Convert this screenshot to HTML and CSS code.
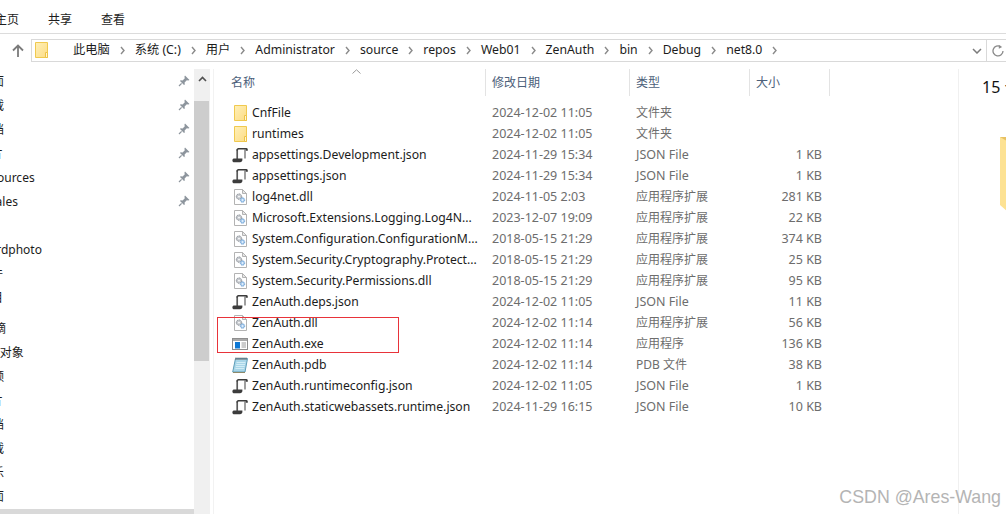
FILE: index.html
```html
<!DOCTYPE html>
<html lang="zh">
<head>
<meta charset="utf-8">
<title>net8.0</title>
<link rel="stylesheet" href="styles.css">
</head>
<body>
<svg class="defs" width="0" height="0" aria-hidden="true">
  <defs>
    <linearGradient id="fy" x1="0" y1="0" x2="1" y2="1">
      <stop offset="0" stop-color="#fff0b8"/><stop offset="1" stop-color="#fcdc85"/>
    </linearGradient>
    <symbol id="folder" viewBox="0 0 16 16">
      <path d="M2.5 .5H14.5V15.5H2.5Z" fill="url(#fy)" stroke="#f0c94f"/>
      <path d="M12.5 15.5V10.5H14.5V15.5Z" fill="#fff6d0" stroke="#eec346"/>
    </symbol>
    <symbol id="script" viewBox="0 0 16 16">
      <path d="M5.2 2.5V12.5" stroke="#5a5a5a" stroke-width="1.7" fill="none"/>
      <path d="M13 2.5V11.5" stroke="#777" stroke-width="1.4" fill="none"/>
      <path d="M4.4 3C4.6 1.6 5.6 1 7 1H14.4C15.6 1 16 2.2 15.8 3.8H13.8V2.6H7C6.2 2.6 6 3 6 3.6H4.4Z" fill="#3c3c3c"/>
      <path d="M.4 13.4C.4 12.2 1.2 11.6 2.4 11.6H10.4V12.8C10.4 14.4 9.4 15.2 8 15.2H2.2C1 15.2 .4 14.6 .4 13.4Z" fill="#3c3c3c"/>
    </symbol>
    <symbol id="dll" viewBox="0 0 16 16">
      <path d="M2.5 .5H10.5L14.5 4.5V15.5H2.5Z" fill="#fff" stroke="#b3b3b3"/>
      <path d="M10.5 .5V4.5H14.5Z" fill="#e6e6e6" stroke="#b3b3b3"/>
      <circle cx="7" cy="7.6" r="2.7" fill="#c4c8cd" stroke="#8a8f96" stroke-dasharray="1.4 .6"/>
      <circle cx="7" cy="7.6" r=".9" fill="#fff"/>
      <circle cx="10.5" cy="11" r="2.2" fill="#a9cdf0" stroke="#6d9fd0" stroke-dasharray="1.2 .5"/>
      <circle cx="10.5" cy="11" r=".7" fill="#fff"/>
    </symbol>
    <symbol id="exe" viewBox="0 0 16 16">
      <rect x=".5" y="2.5" width="15" height="11" fill="#fff" stroke="#8e8e8e"/>
      <rect x="1" y="3" width="14" height="2" fill="#a9a9a9"/>
      <rect x="3" y="6" width="5" height="6.5" fill="#0f78d4"/>
      <path d="M9.5 7H14M9.5 9H14M9.5 11H14" stroke="#9a9a9a"/>
    </symbol>
    <symbol id="pdb" viewBox="0 0 16 16">
      <path d="M3.5 1.5H15.5L13 15H.7Z" fill="#a9d6e8" stroke="#5f9db8"/>
      <path d="M1 15.5H13" stroke="#8f8a6a"/>
      <path d="M4 .5V3M6 .5V3M8 .5V3M10 .5V3M12 .5V3M14 .5V3" stroke="#666"/>
      <path d="M4.6 5.5H13.4M4.2 7.5H13M3.8 9.5H12.6M3.4 11.5H12.2" stroke="#d3edf6"/>
    </symbol>
    <symbol id="pin" viewBox="0 0 12 12">
      <path d="M7 .5L11.5 5L10.3 5.6L8.8 5.2L6.6 7.4L6.8 9.4L6 10L2 6L2.6 5.2L4.6 5.4L6.8 3.2L6.4 1.7Z" fill="#8d959d"/>
      <path d="M3.6 8.4L1 11" stroke="#8d959d" stroke-width="1.2"/>
    </symbol>
    <symbol id="chev" viewBox="0 0 5 9">
      <path d="M1 1L4 4.5L1 8" fill="none" stroke="#8a8a8a" stroke-width="1.4"/>
    </symbol>
  </defs>
</svg>

<header class="ribbon">
  <span class="tab tab-home">主页</span>
  <span class="tab">共享</span>
  <span class="tab">查看</span>
</header>

<nav class="addressbar">
  <svg class="up" width="12" height="13" viewBox="0 0 12 13"><path d="M6 13V2M1 6.5L6 1.5L11 6.5" fill="none" stroke="#7b7b7b" stroke-width="1.8"/></svg>
  <div class="address">
    <svg class="ico crumb-folder"><use href="#folder"/></svg>
    <span>此电脑</span><svg class="chev"><use href="#chev"/></svg>
    <span>系统 (C:)</span><svg class="chev"><use href="#chev"/></svg>
    <span>用户</span><svg class="chev"><use href="#chev"/></svg>
    <span>Administrator</span><svg class="chev"><use href="#chev"/></svg>
    <span>source</span><svg class="chev"><use href="#chev"/></svg>
    <span>repos</span><svg class="chev"><use href="#chev"/></svg>
    <span>Web01</span><svg class="chev"><use href="#chev"/></svg>
    <span>ZenAuth</span><svg class="chev"><use href="#chev"/></svg>
    <span>bin</span><svg class="chev"><use href="#chev"/></svg>
    <span>Debug</span><svg class="chev"><use href="#chev"/></svg>
    <span>net8.0</span><svg class="chev"><use href="#chev"/></svg>
    <svg class="dropdown" width="10" height="6" viewBox="0 0 10 6"><path d="M1 1L5 5L9 1" fill="none" stroke="#7b7b7b" stroke-width="1.5"/></svg>
    <svg class="refresh" width="12" height="12" viewBox="0 0 12 12"><path d="M8.5 1.6A5 5 0 1 0 11 6" fill="none" stroke="#8a8a8a" stroke-width="1.3"/><path d="M6.8 0V3.8L10.2 2Z" fill="#8a8a8a"/></svg>
  </div>
</nav>

<main class="body">
  <aside class="sidebar">
    <div class="tree">
      <div class="tree-row"><span class="lbl c1">桌面</span><svg class="pin"><use href="#pin"/></svg></div>
      <div class="tree-row"><span class="lbl c1">下载</span><svg class="pin"><use href="#pin"/></svg></div>
      <div class="tree-row"><span class="lbl c1">文档</span><svg class="pin"><use href="#pin"/></svg></div>
      <div class="tree-row"><span class="lbl c2">图片</span><svg class="pin"><use href="#pin"/></svg></div>
      <div class="tree-row"><span class="lbl c6">Resources</span><svg class="pin"><use href="#pin"/></svg></div>
      <div class="tree-row"><span class="lbl c5">Sales</span><svg class="pin"><use href="#pin"/></svg></div>
      <div class="tree-row"></div>
      <div class="tree-row"><span class="lbl c7">Wordphoto</span></div>
      <div class="tree-row"><span class="lbl c2">文件</span></div>
      <div class="tree-row group-end"><span class="lbl c2">项目</span></div>
      <div class="tree-row"><span class="lbl c4">网摘</span></div>
      <div class="tree-row"><span class="lbl c3d">3D 对象</span></div>
      <div class="tree-row"><span class="lbl c1">视频</span></div>
      <div class="tree-row"><span class="lbl c2">图片</span></div>
      <div class="tree-row"><span class="lbl c1">文档</span></div>
      <div class="tree-row"><span class="lbl c1">下载</span></div>
      <div class="tree-row"><span class="lbl c1">音乐</span></div>
      <div class="tree-row"><span class="lbl c1">桌面</span></div>
    </div>
    <div class="h-scroll"></div>
  </aside>
  <div class="v-scroll">
    <div class="v-up"><svg width="9" height="6" viewBox="0 0 9 6"><path d="M1 5L4.5 1.5L8 5" fill="none" stroke="#505050" stroke-width="1.6"/></svg></div>
    <div class="v-thumb"></div>
  </div>

  <section class="files">
    <div class="head">
      <div class="hcell hname">名称<svg class="sort" width="9" height="5" viewBox="0 0 9 5"><path d="M.5 4.5L4.5 .8L8.5 4.5" fill="none" stroke="#9a9a9a"/></svg></div>
      <div class="hcell">修改日期</div>
      <div class="hcell">类型</div>
      <div class="hcell">大小</div>
    </div>
    <div class="rows">
      <div class="row"><div class="name"><svg class="ico"><use href="#folder"/></svg>CnfFile</div><div class="meta">2024-12-02 11:05</div><div class="meta cjk">文件夹</div><div class="meta size"></div></div>
      <div class="row"><div class="name"><svg class="ico"><use href="#folder"/></svg>runtimes</div><div class="meta">2024-12-02 11:05</div><div class="meta cjk">文件夹</div><div class="meta size"></div></div>
      <div class="row"><div class="name"><svg class="ico"><use href="#script"/></svg>appsettings.Development.json</div><div class="meta">2024-11-29 15:34</div><div class="meta">JSON File</div><div class="meta size">1 KB</div></div>
      <div class="row"><div class="name"><svg class="ico"><use href="#script"/></svg>appsettings.json</div><div class="meta">2024-11-29 15:34</div><div class="meta">JSON File</div><div class="meta size">1 KB</div></div>
      <div class="row"><div class="name"><svg class="ico"><use href="#dll"/></svg>log4net.dll</div><div class="meta">2024-11-05 2:03</div><div class="meta cjk">应用程序扩展</div><div class="meta size">281 KB</div></div>
      <div class="row"><div class="name"><svg class="ico"><use href="#dll"/></svg>Microsoft.Extensions.Logging.Log4N...</div><div class="meta">2023-12-07 19:09</div><div class="meta cjk">应用程序扩展</div><div class="meta size">22 KB</div></div>
      <div class="row"><div class="name"><svg class="ico"><use href="#dll"/></svg>System.Configuration.ConfigurationM...</div><div class="meta">2018-05-15 21:29</div><div class="meta cjk">应用程序扩展</div><div class="meta size">374 KB</div></div>
      <div class="row"><div class="name"><svg class="ico"><use href="#dll"/></svg>System.Security.Cryptography.Protect...</div><div class="meta">2018-05-15 21:29</div><div class="meta cjk">应用程序扩展</div><div class="meta size">25 KB</div></div>
      <div class="row"><div class="name"><svg class="ico"><use href="#dll"/></svg>System.Security.Permissions.dll</div><div class="meta">2018-05-15 21:29</div><div class="meta cjk">应用程序扩展</div><div class="meta size">95 KB</div></div>
      <div class="row"><div class="name"><svg class="ico"><use href="#script"/></svg>ZenAuth.deps.json</div><div class="meta">2024-12-02 11:05</div><div class="meta">JSON File</div><div class="meta size">11 KB</div></div>
      <div class="row"><div class="name"><svg class="ico"><use href="#dll"/></svg>ZenAuth.dll</div><div class="meta">2024-12-02 11:14</div><div class="meta cjk">应用程序扩展</div><div class="meta size">56 KB</div></div>
      <div class="row"><div class="name"><svg class="ico"><use href="#exe"/></svg>ZenAuth.exe</div><div class="meta">2024-12-02 11:14</div><div class="meta cjk">应用程序</div><div class="meta size">136 KB</div></div>
      <div class="row"><div class="name"><svg class="ico"><use href="#pdb"/></svg>ZenAuth.pdb</div><div class="meta">2024-12-02 11:14</div><div class="meta cjk">PDB 文件</div><div class="meta size">38 KB</div></div>
      <div class="row"><div class="name"><svg class="ico"><use href="#script"/></svg>ZenAuth.runtimeconfig.json</div><div class="meta">2024-12-02 11:05</div><div class="meta">JSON File</div><div class="meta size">1 KB</div></div>
      <div class="row"><div class="name"><svg class="ico"><use href="#script"/></svg>ZenAuth.staticwebassets.runtime.json</div><div class="meta">2024-11-29 16:15</div><div class="meta">JSON File</div><div class="meta size">10 KB</div></div>
    </div>
    <div class="redbox"></div>
  </section>

  <aside class="details">
    <div class="count">15 个项目</div>
    <svg class="bigfolder" width="40" height="74" viewBox="0 0 40 74"><path d="M0 0H40V74H7L0 68Z" fill="#fde293"/><path d="M0 0H7L7 4Z" fill="#e7c163"/></svg>
  </aside>
</main>

<div class="watermark">CSDN @Ares-Wang</div>
</body>
</html>
```

FILE: styles.css
```css
* { box-sizing: border-box; }
html, body { margin: 0; height: 100%; }
body {
  width: 1006px;
  height: 514px;
  overflow: hidden;
  position: relative;
  background: #fff;
  color: #1c1c1c;
  font: 12.2px/17px "Noto Sans", "Noto Sans CJK SC", sans-serif;
  display: flex;
  flex-direction: column;
}
.defs { position: absolute; }

.ribbon {
  height: 34px;
  flex: none;
  border-bottom: 1px solid #dcdcdc;
  display: flex;
  align-items: center;
  gap: 29px;
  padding: 5px 0 0 0;
  font-size: 12px;
}
.tab-home { margin-left: -5px; }

.addressbar {
  height: 35px;
  flex: none;
  display: flex;
  align-items: center;
  padding: 0 0 3px 12px;
}
.up { flex: none; margin-right: 7px; }
.address {
  flex: 1;
  height: 23px;
  border: 1px solid #d9d9d9;
  border-right: 0;
  display: flex;
  align-items: center;
  gap: 10px;
  padding-left: 1px;
  position: relative;
  white-space: nowrap;
  font-size: 12.25px;
}
.address span { position: relative; top: -1px; }
.chev { width: 5px; height: 9px; flex: none; }
.ico { width: 16px; height: 16px; flex: none; }
.crumb-folder { margin-right: 14px; }
.dropdown { position: absolute; left: 940px; top: 8px; }
.refresh { position: absolute; left: 960px; top: 5px; }
.address::after {
  content: "";
  position: absolute;
  left: 954px;
  top: 0;
  bottom: 0;
  width: 1px;
  background: #d9d9d9;
}

.body { flex: 1; min-height: 0; display: flex; }

.sidebar {
  width: 194px;
  flex: none;
  display: flex;
  flex-direction: column;
  overflow: hidden;
}
.tree { flex: 1; min-height: 0; overflow: hidden; font-size: 12px; }
.tree-row {
  height: 24px;
  display: flex;
  align-items: center;
  justify-content: space-between;
  padding-right: 4px;
  white-space: nowrap;
}
.group-end { margin-bottom: 7px; }
.lbl { display: block; }
.c1 { margin-left: -20px; }
.c2 { margin-left: -21px; }
.c4 { margin-left: -18px; }
.c5 { margin-left: -11px; }
.c6 { margin-left: -23px; }
.c7 { margin-left: -22px; }
.c3d { margin-left: -19px; }
.pin { width: 12px; height: 12px; flex: none; }
.h-scroll { height: 5px; flex: none; background: #d9d9d9; }

.v-scroll {
  width: 16px;
  flex: none;
  background: #f0f0f0;
  display: flex;
  flex-direction: column;
}
.v-up { height: 32px; display: flex; justify-content: center; padding-top: 7px; }
.v-thumb { height: 260px; background: #cdcdcd; margin-right: 1px; }

.files {
  width: 745px;
  flex: none;
  margin-left: 3px;
  border-left: 1px solid #f2f2f2;
  position: relative;
}
.head {
  display: grid;
  grid-template-columns: 272px 144px 120px 80px;
  height: 27px;
}
.hcell {
  border-right: 1px solid #e3e3e3;
  color: #4c607a;
  font-size: 12px;
  padding: 5px 0 0 6px;
  position: relative;
}
.hname { padding-left: 17px; }
.sort { position: absolute; left: 138px; top: 0; }
.rows { padding-top: 6px; }
.row {
  display: grid;
  grid-template-columns: 273px 144px 120px 71px;
  height: 21px;
  align-items: center;
  white-space: nowrap;
}
.name { display: flex; align-items: center; gap: 4px; padding-left: 18px; overflow: hidden; }
.meta { color: #6d6d6d; padding-left: 5px; font-size: 12.5px; }
.cjk { font-size: 12px; }
.size { text-align: right; padding-left: 0; }
.redbox {
  position: absolute;
  left: 3px;
  top: 248px;
  width: 182px;
  height: 36px;
  border: 1px solid #e8333a;
}

.details {
  flex: 1;
  border-left: 1px solid #f0f0f0;
  overflow: hidden;
  padding: 7px 0 0 23px;
  white-space: nowrap;
  display: flex;
  flex-direction: column;
}
.count { font-size: 16px; line-height: 22px; color: #111; }
.bigfolder { margin: 39px 0 0 18px; flex: none; }

.watermark {
  position: absolute;
  right: 5px;
  bottom: 6px;
  font: 17.8px/22px "Liberation Sans", sans-serif;
  color: #b4b4b4;
}
```
